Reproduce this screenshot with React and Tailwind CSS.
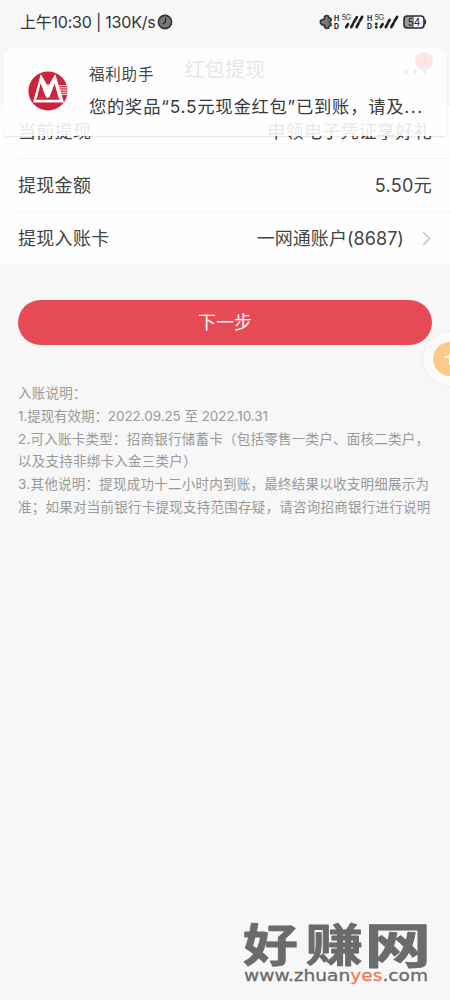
import { ChevronRight } from 'lucide-react';

const ROWS = [
    { label: '当前提现', value: '申领电子凭证享好礼' },
    { label: '提现金额', value: '5.50元' },
    { label: '提现入账卡', value: '一网通账户(8687)', arrow: true },
];

const NOTES = [
    { text: '入账说明：' },
    { text: '1.提现有效期：2022.09.25 至 2022.10.31', spacing: 'tracking-[-0.07px]' },
    { text: '2.可入账卡类型：招商银行储蓄卡（包括零售一类户、面核二类户，' },
    { text: '以及支持非绑卡入金三类户）' },
    { text: '3.其他说明：提现成功十二小时内到账，最终结果以收支明细展示为' },
    { text: '准；如果对当前银行卡提现支持范围存疑，请咨询招商银行进行说明' },
];

// Network signal: HD marks, 5G label and slanted bars
function Signal({ dots }) {
    return (
        <svg width="33" height="16" viewBox="0 0 33 16" fill="none" className="shrink-0">
            <g fill="#222" fontFamily="Inter, sans-serif" fontWeight="700" fontSize="7">
                <text x="0" y="6.5">H</text>
                <text x="0" y="14.5">D</text>
            </g>
            <text x="7.5" y="6" fill="#444" fontFamily="Inter, sans-serif" fontSize="7.5" letterSpacing="-0.5">5G</text>
            <g stroke="#222" strokeWidth="2.7" strokeLinecap="round">
                {dots ? (
                    <path d="M9.3 9.8v.1M9.3 13.2v.1M13.8 13l1.8-2.8M18.8 13l1.6-2.8M21 8.6l1.6-2.6M24.3 13l2.2-3.8M27.4 7.2l2.7-4.2" />
                ) : (
                    <path d="M12.2 13l1.8-2.8M17.3 13l1.6-2.8M19.7 8.4l3.1-5.2M22.6 13l2-3.8M25.6 7.2l2.5-4.2" />
                )}
            </g>
        </svg>
    );
}

function StatusBar() {
    return (
        <div className="flex h-[42px] items-center justify-between pl-5 pr-[23px] pt-[2px]">
            <div className="flex items-center">
                <span className="whitespace-pre text-[16px] tracking-[-0.22px] text-[#333]">上午10:30 | 130K/s</span>
                <svg width="16" height="16" viewBox="0 0 16 16" fill="none" className="ml-[2px]">
                    <circle cx="8" cy="8" r="6.6" fill="#777" stroke="#333" strokeWidth="1.6" />
                    <path d="M8.5 4v4L6 10" stroke="#222" strokeWidth="1.2" />
                </svg>
            </div>
            <div className="flex items-center">
                <svg width="14" height="16" viewBox="0 0 14 16" className="mr-[1px]">
                    <path
                        d="M5.5 5V2.5l2-1 2 .5L10 4l2 .5v2L10.5 8l1.5 1.5v2l-2 .5-.5 2.2-2 .3-2-1.5v-2H3l-1.5-2V6.5z"
                        fill="#777" stroke="#333" strokeWidth="1.7" strokeLinejoin="round"
                    />
                </svg>
                <Signal />
                <Signal dots />
                <svg width="24" height="14" viewBox="0 0 24 14" className="ml-[3px]">
                    <path d="M4 1h7v12H4a3 3 0 0 1-3-3V4a3 3 0 0 1 3-3z" fill="#999" />
                    <rect x="1" y="1" width="20" height="12" rx="3.2" fill="none" stroke="#2b2b2b" strokeWidth="1.6" />
                    <path d="M22 4.7q1.6 2.3 0 4.6z" fill="#2b2b2b" stroke="#2b2b2b" />
                    <text x="11" y="10.6" textAnchor="middle" fontSize="10" fontFamily="Inter, sans-serif" fill="#222">54</text>
                </svg>
            </div>
        </div>
    );
}

function BankLogo() {
    return (
        <svg width="40" height="40" viewBox="0 0 40 40" className="shrink-0">
            <circle cx="20" cy="20" r="19.6" fill="#c9253c" />
            <path d="M31 14.6h9M31.5 16.8h8.5M32 19h8M32.5 21.2h7.5M33 23.4h7" stroke="#fff" strokeWidth="0.9" />
            <path d="M12.8 3 20 15.5 27.2 3 36 31.5H5z" fill="#fff" />
            <path d="M12.6 12.5 18.2 26.5H9z" fill="#c9253c" />
            <path d="M26.6 12.5 30.4 26.5H21.4z" fill="#c9253c" />
            <path d="M9 26.3h21.6l1.2 2.5H8z" fill="#c9253c" />
            <path d="M15 19.5 19.8 27.6 24 18.5 20 13z" fill="#fff" />
        </svg>
    );
}

function Notification() {
    return (
        <div className="absolute left-[3px] right-[3px] top-[47px] flex h-[89px] rounded-t-[14px] rounded-b-[4px] bg-[#fefefe]/88 pl-[25px] shadow-[0_1px_2px_rgba(0,0,0,0.1)]">
            <div className="pt-6">
                <BankLogo />
            </div>
            <div className="ml-[21px] pt-[17px]">
                <div className="text-[15.5px] leading-[22px] tracking-[0.8px] text-[#4a4a4a]">福利助手</div>
                <div className="mt-[8px] whitespace-nowrap text-[17.3px] leading-[25px] tracking-[0.78px] text-[#3a3a3a]">
                    您的奖品“5.5元现金红包”已到账，请及<span className="tracking-[1.5px]">...</span>
                </div>
            </div>
        </div>
    );
}

function Watermark() {
    return (
        <svg width="190" height="86" viewBox="0 -14 190 86" className="absolute bottom-[12px] left-[241px]">
            <g
                fill="#6b6b6b" stroke="#6b6b6b" strokeWidth="1" strokeLinejoin="round"
                fontFamily="'Noto Sans CJK SC', sans-serif" fontWeight="700" fontSize="56"
            >
                <text transform="translate(2 46) scale(0.98 0.81)">好</text>
                <text transform="translate(64.5 46) scale(1.03 0.81)">赚</text>
                <text transform="translate(123.5 47) scale(1.19 0.85)">网</text>
            </g>
            <text
                x="3" y="64.5" textLength="184" lengthAdjust="spacingAndGlyphs"
                fontFamily="'DejaVu Sans', sans-serif" fontSize="15.5" fill="#6b6b6b" stroke="#6b6b6b" strokeWidth="0.3"
            >
                www.zhuan<tspan fill="#f5794f" stroke="#f5794f">yes</tspan>.com
            </text>
        </svg>
    );
}

export default function App() {
    return (
        <div className="relative h-[1000px] w-[450px] overflow-hidden bg-[#f7f7f7] font-[Inter,'Noto_Sans_CJK_SC',sans-serif]">
            <StatusBar />

            <header className="flex h-[63px] items-center justify-between px-5 pb-[8px] text-[#333]">
                <svg width="32" height="24" viewBox="0 0 32 24" fill="none" stroke="#555">
                    <path d="m17 5-6 6" />
                </svg>
                <h1 className="text-[20px] tracking-[0.2px]">红包提现</h1>
                <div className="relative w-8 font-bold">
                    <svg width="28" height="20" viewBox="0 0 28 20" fill="#333">
                        <circle cx="8.5" cy="12" r="1.4" />
                        <circle cx="17.5" cy="12" r="1.4" />
                        <circle cx="26.5" cy="12" r="1.4" />
                    </svg>
                    <span className="absolute -top-[8px] left-[17px] flex h-[18px] w-[18px] items-center justify-center rounded-full bg-[#f03b3b] text-[12px] font-normal text-[#b00000]">
                        1
                    </span>
                </div>
            </header>

            <main>
                <div className="bg-[#fefefe]">
                    {ROWS.map((row, i) => (
                        <div key={row.label} className="pl-[18px]">
                            <div className={`flex h-[53px] items-center text-[18px] tracking-[0.3px] text-[#444] ${i > 0 ? 'border-t border-[#f3f3f3]' : ''}`}>
                                <span>{row.label}</span>
                                <span className={`ml-auto ${row.arrow ? 'mr-[10px] tracking-[0.05px]' : 'mr-[18px]'}`}>{row.value}</span>
                                {row.arrow && (
                                    <ChevronRight className="mr-[11px] h-[25px] w-[25px] text-[#bbb]" strokeWidth={1.1} />
                                )}
                            </div>
                        </div>
                    ))}
                </div>

                <button className="mx-[18px] mt-[36px] flex h-[45px] w-[414px] items-center justify-center rounded-full bg-[#e64a54] text-[18px] text-white">
                    下一步
                </button>

                <div className="mt-[37px] px-[18px] text-[13.5px] leading-[22.8px] tracking-[0.25px] text-[#999]">
                    {NOTES.map((note) => (
                        <p key={note.text} className={`whitespace-nowrap ${note.spacing || ''}`}>{note.text}</p>
                    ))}
                </div>
            </main>

            {/* Floating shortcut, half off the right edge */}
            <div className="absolute left-[423px] top-[332px] flex h-[54px] w-[54px] items-center justify-center rounded-full bg-[#fafafa] shadow-[0_0_3px_rgba(0,0,0,0.08)]">
                <svg width="34" height="34" viewBox="0 0 34 34">
                    <circle cx="17" cy="17" r="17" fill="#fccb8a" />
                    <path d="M17 11v12M11.5 15.5l5.5-1.5 5.5 1.5" fill="none" stroke="#fff" strokeWidth="2" />
                </svg>
            </div>

            <Notification />
            <Watermark />
        </div>
    );
}
